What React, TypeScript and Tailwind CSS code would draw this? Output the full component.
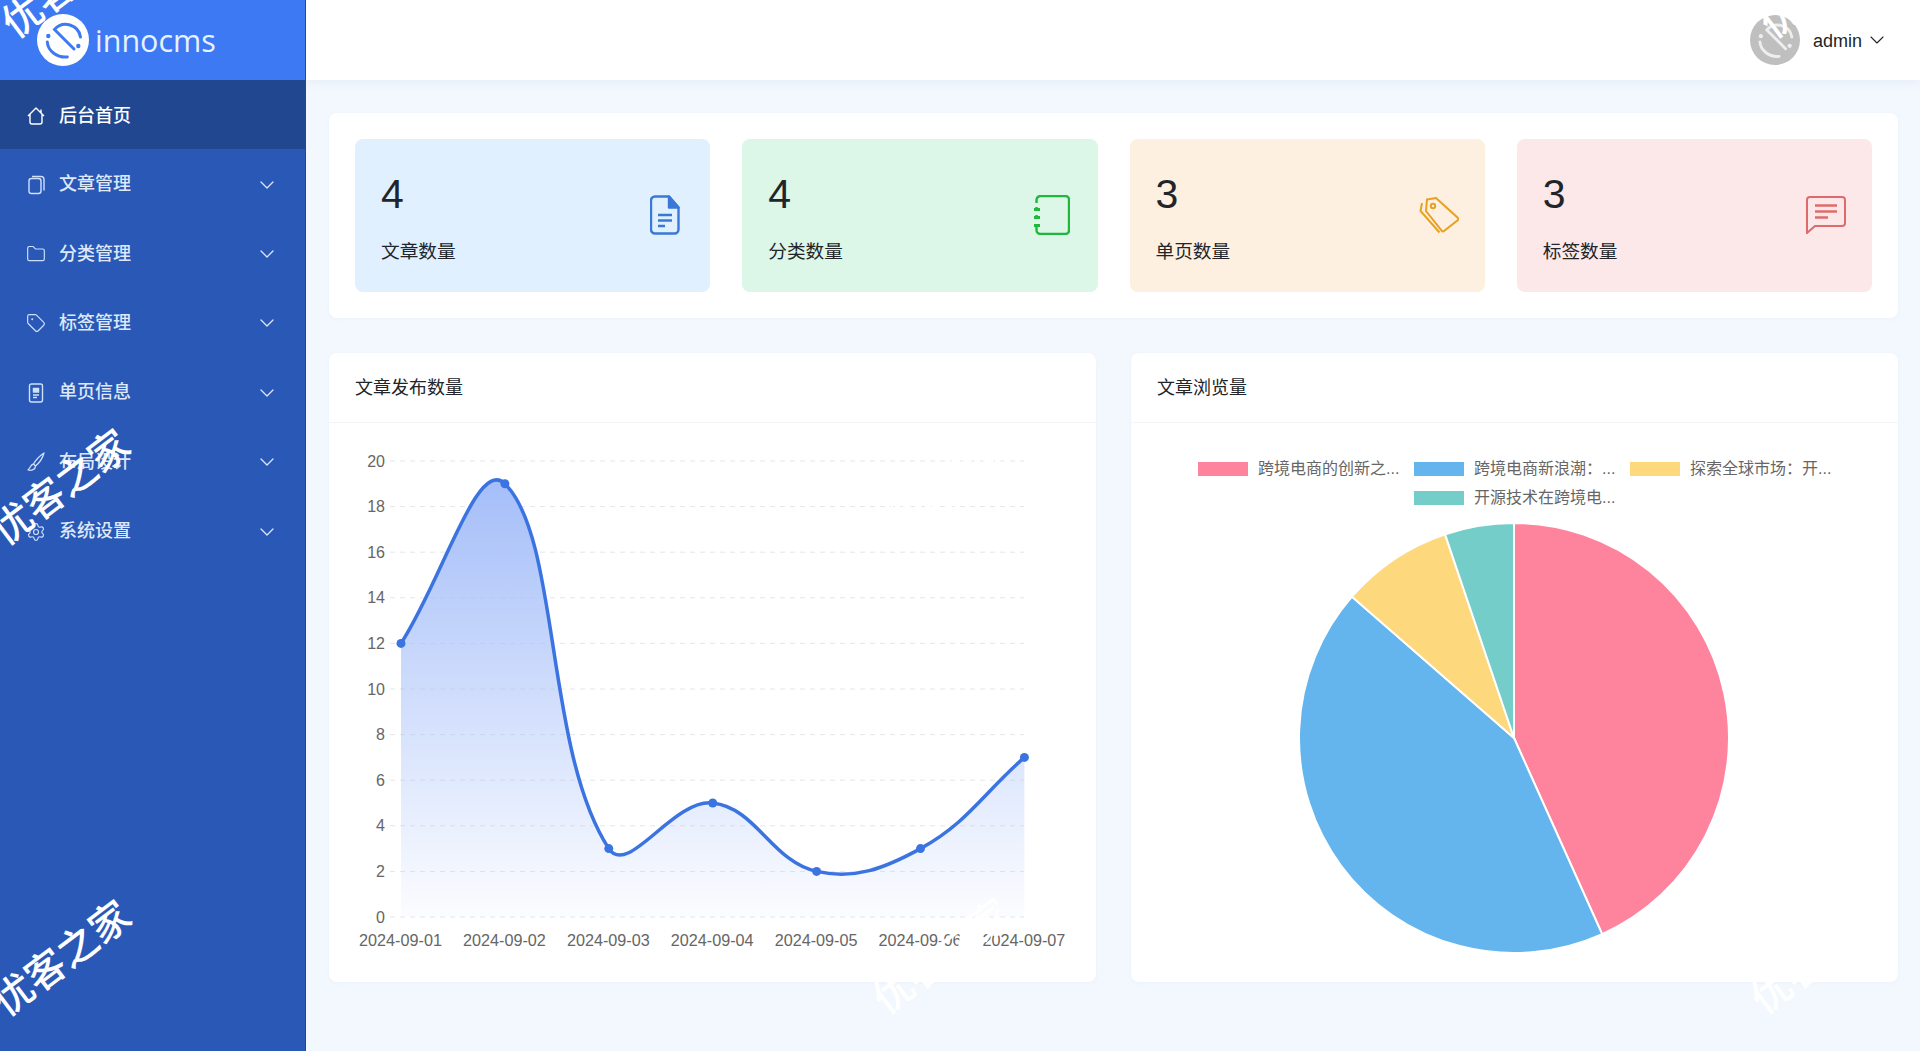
import { ChevronDown, Folder, Settings, Tag } from "lucide-react";

const font = "font-['Liberation_Sans','Noto_Sans_CJK_SC',sans-serif]";

const menu = [
  { label: "文章管理", icon: <FilesIcon /> },
  { label: "分类管理", icon: <Folder size={20} strokeWidth={1.4} /> },
  { label: "标签管理", icon: <Tag size={20} strokeWidth={1.4} /> },
  { label: "单页信息", icon: <PageIcon /> },
  { label: "布局设计", icon: <BrushIcon /> },
  { label: "系统设置", icon: <Settings size={20} strokeWidth={1.4} /> }
];

const stats = [
  { value: 4, label: "文章数量", bg: "bg-[#e0f0fe]", icon: <DocIcon />, mr: "mr-[4px]" },
  { value: 4, label: "分类数量", bg: "bg-[#dcf6e8]", icon: <NoteIcon />, mr: "mr-[2px]" },
  { value: 3, label: "单页数量", bg: "bg-[#fef0e0]", icon: <TagsIcon />, mr: "mr-0" },
  { value: 3, label: "标签数量", bg: "bg-[#fde8e9]", icon: <CommentIcon />, mr: "mr-0" }
];

const legend = [
  { label: "跨境电商的创新之...", color: "bg-[#fe849e]" },
  { label: "跨境电商新浪潮：...", color: "bg-[#64b5ee]" },
  { label: "探索全球市场：开...", color: "bg-[#fdd87c]" },
  { label: "开源技术在跨境电...", color: "bg-[#74cdc9]" }
];

const dates = ["2024-09-01", "2024-09-02", "2024-09-03", "2024-09-04", "2024-09-05", "2024-09-06", "2024-09-07"];
const values = [12, 19, 3, 5, 2, 3, 7];

function HomeIcon() {
  return (
    <svg width="20" height="20" viewBox="0 0 20 20" fill="none" stroke="currentColor" strokeWidth="1.4" strokeLinejoin="round">
      <path d="M2 10l8-8 5 5V3.5M18 10l-3-3M4 8.5V16a2 2 0 0 0 2 2h8a2 2 0 0 0 2-2V8.5" />
    </svg>
  );
}

function FilesIcon() {
  return (
    <svg width="20" height="20" viewBox="0 0 20 20" fill="none" stroke="currentColor" strokeWidth="1.4">
      <rect x="3" y="3.5" width="12" height="15" rx="2.5" />
      <path d="M6 1.5h9a3 3 0 0 1 3 3v11" />
    </svg>
  );
}

function PageIcon() {
  return (
    <svg width="20" height="20" viewBox="0 0 20 20" fill="none" stroke="currentColor" strokeWidth="1.4">
      <rect x="3.5" y="1" width="13" height="18" rx="2" />
      <path d="M7 5h6v4.5H7z" fill="currentColor" strokeWidth="0.5" />
      <path d="M7 12h6M7 14.5h4" />
    </svg>
  );
}

function BrushIcon() {
  return (
    <svg width="20" height="20" viewBox="0 0 20 20" fill="none" stroke="currentColor" strokeWidth="1.3" strokeLinejoin="round">
      <path d="M18 1C13.5 4 9.5 8.5 7.5 12l2 2C12.500 11.500 16.500 6.500 18 1z" />
      <path d="M7.5 12C4.500 12.500 4.500 16 2 18c3.500 1 7.500-.5 7.500-4" />
    </svg>
  );
}

function DocIcon() {
  return (
    <svg width="30" height="40" viewBox="0 0 30 40" fill="none" stroke="#3a78d8" strokeWidth="2.4" strokeLinejoin="round">
      <path d="M5 1.5h14l9.5 11v22a4 4 0 0 1-4 4H5a4 4 0 0 1-4-4v-29a4 4 0 0 1 4-4z" />
      <path d="M19 1.5l9.5 11H19z" fill="#3a78d8" />
      <path d="M8 20h14M8 25.5h14M8 31h7" />
    </svg>
  );
}

function NoteIcon() {
  return (
    <svg width="36" height="40" viewBox="0 0 36 40" fill="none" stroke="#1fb83a" strokeWidth="2.4">
      <path d="M2.5 8V5a4 4 0 0 1 4-4h25a3.500 3.500 0 0 1 3.500 3.500v31a3.500 3.500 0 0 1-3.500 3.500h-25a4 4 0 0 1-4-4v-3" />
      <path d="M2.5 12v2M2.5 20v2M2.5 29v2" />
      <path d="M0 14.5h6M0 22.5h6M0 30.5h6" strokeWidth="3" />
    </svg>
  );
}

function TagsIcon() {
  return (
    <svg width="40" height="37" viewBox="0 0 40 37" fill="none" stroke="#e8a020" strokeWidth="2">
      <path d="M8 2.5l9-1.500 22 20a1.500 1.500 0 0 1 0 2L25 34a1.500 1.500 0 0 1-2 0L7 14z" />
      <path d="M3 6l-1.500 8 19 21.500" />
      <circle cx="14" cy="9" r="2.2" />
    </svg>
  );
}

function CommentIcon() {
  return (
    <svg width="40" height="38" viewBox="0 0 40 38" fill="none" stroke="#de6b6b" strokeWidth="2">
      <path d="M1 4a3 3 0 0 1 3-3h32a3 3 0 0 1 3 3v23a3 3 0 0 1-3 3H9l-8 7z" />
      <path d="M9 9.5h22M9 15.5h22M9 21.5h13" strokeWidth="2.5" />
    </svg>
  );
}

function Logo({ size, disc, color }: { size: number; disc: string; color: string }) {
  return (
    <svg width={size} height={size} viewBox="0 0 52 52">
      <circle cx="26" cy="26" r="26" fill={disc} />
      <path d="M37 35L17.5 15.5A15 15 0 0 1 43.5 23" fill="none" stroke={color} strokeWidth="3" strokeLinecap="round" />
      <path d="M10.3 28C11 37 20 44 30.3 43" fill="none" stroke={color} strokeWidth="3" strokeLinecap="round" />
      <circle cx="11.3" cy="22" r="2.2" fill={color} />
      <circle cx="41.3" cy="32" r="2.2" fill={color} />
    </svg>
  );
}

function Watermark({ className }: { className: string }) {
  return (
    <span
      className={`pointer-events-none absolute w-[160px] -rotate-[37deg] text-center font-['Noto_Sans_CJK_SC',sans-serif] text-[40px] leading-[48px] font-medium whitespace-nowrap text-white ${className}`}
    >
      优客之家
    </span>
  );
}

// same spline maths as chart.js with tension 0.4
function linePath(points: number[][]) {
  let d = `M${points[0][0]} ${points[0][1]}`;
  const after: number[][] = [];
  const before: number[][] = [];
  points.forEach((p, i) => {
    const prev = points[i - 1] ?? p;
    const next = points[i + 1] ?? p;
    const d01 = Math.hypot(p[0] - prev[0], p[1] - prev[1]);
    const d12 = Math.hypot(next[0] - p[0], next[1] - p[1]);
    const total = d01 + d12;
    const fa = (0.4 * d01) / total;
    const fb = (0.4 * d12) / total;
    before[i] = [p[0] - fa * (next[0] - prev[0]), p[1] - fa * (next[1] - prev[1])];
    after[i] = [p[0] + fb * (next[0] - prev[0]), p[1] + fb * (next[1] - prev[1])];
  });
  for (let i = 1; i < points.length; i++) {
    d += `C${after[i - 1][0]} ${after[i - 1][1]} ${before[i][0]} ${before[i][1]} ${points[i][0]} ${points[i][1]}`;
  }
  return d;
}

function LineChart() {
  const y = (v: number) => 494 - 22.8 * v;
  const x = (i: number) => 72 + 103.9 * i;
  const points = values.map((v, i) => [x(i), y(v)]);
  const line = linePath(points);
  return (
    <svg width="766" height="559" viewBox="0 0 766 559" className="block">
      <defs>
        <linearGradient id="area" gradientUnits="userSpaceOnUse" x1="0" y1="62" x2="0" y2="494">
          <stop offset="0" stopColor="#a6bff9" />
          <stop offset="1" stopColor="#a6bff9" stopOpacity="0.04" />
        </linearGradient>
      </defs>
      {[0, 2, 4, 6, 8, 10, 12, 14, 16, 18, 20].map((v) => (
        <g key={v}>
          <path d={`M61 ${y(v)}H695`} stroke="#e6e6e6" strokeDasharray="5 5" />
          <text x="56" y={y(v) + 5.5} textAnchor="end" fontSize="16" fill="#666" fontFamily="Liberation Sans">
            {v}
          </text>
        </g>
      ))}
      <path d={`${line}V494H72Z`} fill="url(#area)" />
      <path d={line} fill="none" stroke="#3b74e0" strokeWidth="3.5" />
      {points.map((p) => (
        <circle key={p[0]} cx={p[0]} cy={p[1]} r="4.5" fill="#3b74e0" />
      ))}
      {dates.map((d, i) => (
        <text key={d} x={x(i) - 0.5} y="523" textAnchor="middle" fontSize="16.2" fill="#666" fontFamily="Liberation Sans">
          {d}
        </text>
      ))}
    </svg>
  );
}

function slice(from: number, to: number) {
  const r = 215;
  const pt = (a: number) => `${r * Math.sin((a * Math.PI) / 180)} ${-r * Math.cos((a * Math.PI) / 180)}`;
  return `M0 0L${pt(from)}A${r} ${r} 0 ${to - from > 180 ? 1 : 0} 1 ${pt(to)}Z`;
}

function PieChart() {
  return (
    <svg width="434" height="434" viewBox="-217 -217 434 434" className="mx-auto block">
      <path d={slice(0, 155.8)} fill="#fe849e" stroke="white" strokeWidth="2" />
      <path d={slice(155.8, 311.1)} fill="#64b5ee" stroke="white" strokeWidth="2" />
      <path d={slice(311.1, 341.3)} fill="#fdd87c" stroke="white" strokeWidth="2" />
      <path d={slice(341.3, 360)} fill="#74cdc9" stroke="white" strokeWidth="2" />
    </svg>
  );
}

export default function App() {
  return (
    <div className={`relative flex h-[1051px] overflow-hidden bg-[#f3f8fe] ${font}`}>
      <aside className="flex w-[306px] shrink-0 flex-col border-r border-[#21479a] bg-[#2958b7] text-[#dfe8f8]">
        <div className="flex h-[80px] items-center gap-[6px] bg-[#3c79f3] pl-[37px]">
          <Logo size={52} disc="white" color="#3c79f3" />
          <span className="font-['Open_Sans',sans-serif] text-[30.5px] leading-none font-normal text-[#e8f2ff]">innocms</span>
        </div>
        <div className="flex h-[69px] items-center bg-[#20478f] pt-[3px] pl-[26px] text-[18px] font-medium text-white">
          <span className="flex w-[33px]">
            <HomeIcon />
          </span>
          后台首页
        </div>
        {menu.map((m) => (
          <div key={m.label} className="flex h-[69.4px] items-center pt-[2px] pr-[26px] pl-[26px] text-[18px] font-medium">
            <span className="flex w-[33px] text-[#cfe0fb]">{m.icon}</span>
            <span className="flex-1">{m.label}</span>
            <ChevronDown size={24} strokeWidth={1.3} />
          </div>
        ))}
      </aside>

      <div className="flex min-w-0 flex-1 flex-col">
        <header className="flex h-[80px] items-center justify-end bg-white pr-[31px] shadow-[0_2px_10px_rgba(120,140,180,0.1)]">
          <span className="mr-[13px] flex">
            <Logo size={50} disc="#bfbfbf" color="#eeeeee" />
          </span>
          <span className="pt-[2px] text-[18px] text-[#212529]">admin</span>
          <ChevronDown size={24} strokeWidth={1.1} className="ml-[3px] text-[#212529]" />
        </header>

        <main className="flex flex-col gap-[35px] pt-[33px] pr-[22px] pl-[23px]">
          <section className="grid grid-cols-4 gap-[32px] rounded-lg bg-white p-[26px] shadow-[0_1px_4px_rgba(120,140,180,0.06)]">
            {stats.map((s) => (
              <div key={s.label} className={`flex h-[153px] items-center justify-between rounded-lg pr-[26px] pl-[26px] ${s.bg}`}>
                <div className="pt-[5px] text-[#212529]">
                  <div className="text-[41px] leading-[46px]">{s.value}</div>
                  <div className="mt-[22px] text-[18.7px] leading-[26px]">{s.label}</div>
                </div>
                <span className={`-mt-[1px] flex ${s.mr}`}>{s.icon}</span>
              </div>
            ))}
          </section>

          <section className="grid grid-cols-2 gap-[35px]">
            <div className="h-[629px] rounded-lg bg-white shadow-[0_1px_4px_rgba(120,140,180,0.06)]">
              <h3 className="flex h-[70px] items-center border-b border-[#f3f5f8] pt-[2px] pl-[26px] text-[18px] font-normal text-[#212529]">文章发布数量</h3>
              <LineChart />
            </div>
            <div className="h-[629px] rounded-lg bg-white shadow-[0_1px_4px_rgba(120,140,180,0.06)]">
              <h3 className="flex h-[70px] items-center border-b border-[#f3f5f8] pt-[2px] pl-[26px] text-[18px] font-normal text-[#212529]">文章浏览量</h3>
              <div className="mx-auto mt-[33px] flex w-[660px] flex-wrap justify-center gap-x-[15px] gap-y-[3.4px]">
                {legend.map((l) => (
                  <div key={l.label} className="flex h-[26px] w-[201px] items-center gap-[10px] text-[16px] whitespace-nowrap text-[#666]">
                    <span className={`h-[14px] w-[50px] shrink-0 ${l.color}`} />
                    {l.label}
                  </div>
                ))}
              </div>
              <div className="mt-[10px] pr-[2px]">
                <PieChart />
              </div>
            </div>
          </section>
        </main>
      </div>

      <Watermark className="-top-[46px] -left-[11px]" />
      <Watermark className="top-[461px] -left-[21px]" />
      <Watermark className="top-[932px] -left-[20px]" />
      <Watermark className="-top-[46px] left-[1747px]" />
      <Watermark className="top-[461px] left-[867px]" />
      <Watermark className="top-[930px] left-[860px]" />
      <Watermark className="top-[930px] left-[1738px]" />
    </div>
  );
}
